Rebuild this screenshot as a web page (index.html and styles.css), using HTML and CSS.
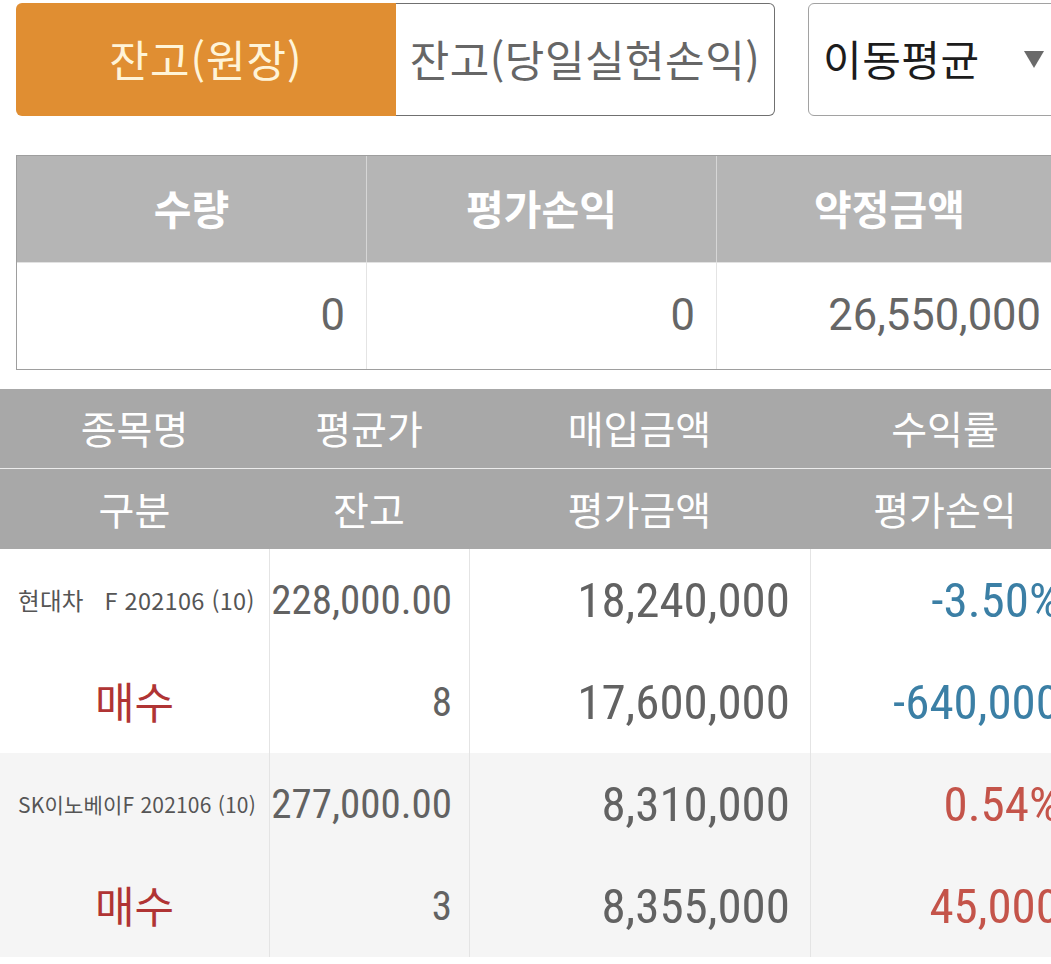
FILE: index.html
```html
<!DOCTYPE html>
<html lang="ko">
<head>
<meta charset="utf-8">
<title>잔고</title>
<link rel="stylesheet" href="styles.css">
</head>
<body>
<div class="page">
  <div class="toolbar">
    <div class="tabs">
      <div class="tab tab-active">잔고(원장)</div>
      <div class="tab tab-plain">잔고(당일실현손익)</div>
    </div>
    <div class="select">
      <span class="select-label">이동평균</span>
      <span class="caret" aria-hidden="true"></span>
    </div>
  </div>

  <div class="summary">
    <div class="s-head">
      <div class="s-cell">수량</div>
      <div class="s-cell">평가손익</div>
      <div class="s-cell">약정금액</div>
    </div>
    <div class="s-body">
      <div class="s-cell">0</div>
      <div class="s-cell">0</div>
      <div class="s-cell">26,550,000</div>
    </div>
  </div>

  <div class="list">
    <div class="l-head">
      <div class="l-row">
        <div>종목명</div><div>평균가</div><div>매입금액</div><div>수익률</div>
      </div>
      <div class="l-row l-row-second">
        <div>구분</div><div>잔고</div><div>평가금액</div><div>평가손익</div>
      </div>
    </div>

    <div class="item">
      <div class="c name">현대차   F 202106 (10)</div>
      <div class="c num sm">228,000.00</div>
      <div class="c num">18,240,000</div>
      <div class="c num down">-3.50%</div>
      <div class="c side">매수</div>
      <div class="c num sm">8</div>
      <div class="c num">17,600,000</div>
      <div class="c num down">-640,000</div>
    </div>

    <div class="item item-alt">
      <div class="c name name-small">SK이노베이F 202106 (10)</div>
      <div class="c num sm">277,000.00</div>
      <div class="c num">8,310,000</div>
      <div class="c num up">0.54%</div>
      <div class="c side">매수</div>
      <div class="c num sm">3</div>
      <div class="c num">8,355,000</div>
      <div class="c num up">45,000</div>
    </div>
  </div>
</div>
</body>
</html>
```

FILE: styles.css
```css
html, body {
  margin: 0;
  padding: 0;
  overflow: hidden;
  background: #ffffff;
}

body {
  font-family: "Noto Sans CJK KR", "Noto Sans", sans-serif;
}

.page {
  width: 1080px;
  padding-top: 3px;
}

/* ---------- toolbar ---------- */
.toolbar {
  display: flex;
  gap: 33px;
  margin-left: 16px;
  height: 113px;
}

.tabs {
  display: flex;
  width: 759px;
}

.tab {
  display: flex;
  align-items: center;
  justify-content: center;
  font-size: 43px;
  box-sizing: border-box;
  padding-bottom: 4px;
}

.tab-active {
  width: 380px;
  background: #e08e32;
  color: #fff4d8;
  border-radius: 6px 0 0 6px;
  letter-spacing: 1px;
}

.tab-plain {
  flex: 1;
  color: #666666;
  border: 1px solid #707070;
  border-left: none;
  border-radius: 0 6px 6px 0;
  letter-spacing: 0.5px;
}

.select {
  width: 258px;
  box-sizing: border-box;
  border: 1px solid #a2a2a2;
  border-radius: 6px;
  display: flex;
  align-items: center;
  justify-content: space-between;
  padding: 0 21px 4px 14px;
}

.select-label {
  font-size: 42px;
  color: #1c1c1c;
  letter-spacing: 0.5px;
}

.caret {
  width: 0;
  height: 0;
  border-left: 10px solid transparent;
  border-right: 10px solid transparent;
  border-top: 17px solid #6a6a6a;
  margin-top: 4px;
}

/* ---------- summary ---------- */
.summary {
  margin: 39px 0 0 16px;
  width: 1045px;
  border: 1px solid #9e9e9e;
}

.s-head, .s-body {
  display: grid;
  grid-template-columns: 349px 350px 1fr;
  height: 106px;
}

.s-head {
  background: #b5b5b5;
  border-bottom: 1px solid #e2e2e2;
}

.s-head .s-cell {
  display: flex;
  align-items: center;
  justify-content: center;
  color: #ffffff;
  font-weight: 700;
  font-size: 41px;
  padding-bottom: 4px;
}

.s-head .s-cell + .s-cell {
  border-left: 1px solid #d6d6d6;
}

.s-body .s-cell {
  display: flex;
  align-items: center;
  justify-content: flex-end;
  padding: 0 21px 2px 0;
  color: #666666;
  font-family: Roboto, "Liberation Sans", sans-serif;
  font-size: 43.5px;
}

.s-body .s-cell + .s-cell {
  border-left: 1px solid #e4e4e4;
}

/* ---------- list ---------- */
.list {
  margin-top: 19px;
  width: 1080px;
}

.l-head {
  background: #a8a8a8;
}

.l-row {
  display: grid;
  grid-template-columns: 269px 200px 341px 270px;
  height: 79px;
  color: #ffffff;
  font-size: 39px;
}

.l-row > div {
  display: flex;
  align-items: center;
  justify-content: center;
  padding-bottom: 3px;
}

.l-row-second {
  height: 80px;
  border-top: 1px solid #ececec;
}

.item {
  display: grid;
  grid-template-columns: 269px 200px 341px 270px;
  grid-template-rows: 102px 102px;
  background: #ffffff;
}

.item-alt {
  background: #f5f5f5;
}

.c {
  display: flex;
  align-items: center;
  box-sizing: border-box;
  border-left: 1px solid #e4e4e4;
}

.c.name, .c.side {
  border-left: none;
}

.name {
  padding-left: 18px;
  font-size: 23.5px;
  color: #555555;
  white-space: pre;
  letter-spacing: 0.3px;
}

.name-small {
  font-size: 21px;
  letter-spacing: 0.2px;
}

.side {
  justify-content: center;
  font-size: 43px;
  color: #b03434;
  padding-bottom: 4px;
}

.num {
  justify-content: flex-end;
  font-family: Roboto, "Liberation Sans", sans-serif;
  font-stretch: 87.5%;
  color: #626262;
  font-size: 49px;
  padding-right: 20px;
}

.num.sm {
  font-size: 41px;
  padding-right: 17px;
}

.down {
  color: #3b7fa5;
}

.up {
  color: #c4544a;
}
```
